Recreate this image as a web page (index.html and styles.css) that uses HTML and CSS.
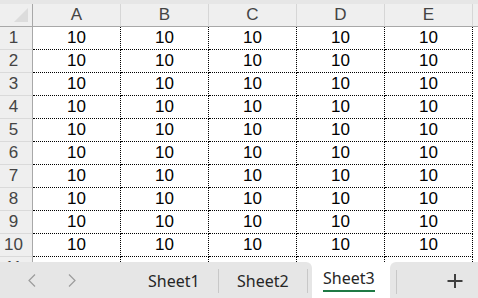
FILE: index.html
```html
<!DOCTYPE html>
<html lang="en">
<head>
  <meta charset="UTF-8">
  <meta name="viewport" content="width=device-width, initial-scale=1.0">
  <title>Sheet3</title>
  <link rel="stylesheet" href="styles.css">
</head>
<body>
  <div class="top-strip"></div>
  <div class="grid">
    <div class="corner"><span class="corner-mark"></span></div>
    <div class="col-head">A</div>
    <div class="col-head">B</div>
    <div class="col-head">C</div>
    <div class="col-head">D</div>
    <div class="col-head">E</div>
    <div class="col-head filler"></div>
  </div>

  <div class="tab-bar">
    <div class="tabs-left">
      <div class="tab-nav">
        <svg class="nav-arrow" width="8" height="13" viewBox="0 0 8 13"><path d="M7 0.5 L1 6.5 L7 12.5" fill="none" stroke="#9c9c9c" stroke-width="1.2"/></svg>
        <svg class="nav-arrow" width="8" height="13" viewBox="0 0 8 13"><path d="M1 0.5 L7 6.5 L1 12.5" fill="none" stroke="#9c9c9c" stroke-width="1.2"/></svg>
      </div>
      <div class="tab">Sheet1</div>
      <div class="tab">Sheet2</div>
    </div>
    <div class="tab active"><span class="tab-label">Sheet3</span></div>
    <div class="tabs-right">
      <div class="add-tab">
        <svg width="16" height="14" viewBox="0 0 16 14"><path d="M0.5 7 H15.5 M8 0 V14" stroke="#404040" stroke-width="2"/></svg>
      </div>
    </div>
  </div>

  <script>
    // Rows 1..10 hold the value 10 in each of the five columns;
    // row 11 only peeks out above the tab bar
    const grid = document.querySelector('.grid');
    for (let row = 1; row <= 11; row++) {
      const head = document.createElement('div');
      head.className = 'row-head';
      head.textContent = row;
      grid.appendChild(head);
      for (let col = 0; col < 5; col++) {
        const cell = document.createElement('div');
        cell.className = 'cell';
        if (row <= 10) cell.textContent = '10';
        grid.appendChild(cell);
      }
      const filler = document.createElement('div');
      filler.className = 'cell filler';
      grid.appendChild(filler);
    }
  </script>
</body>
</html>
```

FILE: styles.css
```css
* {
  margin: 0;
  padding: 0;
  box-sizing: border-box;
}

body {
  width: 478px;
  height: 298px;
  overflow: hidden;
  background-color: #ffffff;
  font-family: "Liberation Sans", Arial, sans-serif;
}

.top-strip {
  height: 4px;
  background-color: #e6e6e6;
}

.grid {
  display: grid;
  grid-template-columns: 33px repeat(5, 88px) 1fr;
  grid-auto-rows: 23px;
  height: 258px;
  overflow: hidden;
  font-size: 17px;
}

.corner {
  background-color: #efefef;
  border-right: 1px solid #a8a8a8;
  border-bottom: 1px solid #a8a8a8;
  position: relative;
}

.corner-mark {
  position: absolute;
  left: 14px;
  top: 4px;
  width: 0;
  height: 0;
  border-left: 14px solid transparent;
  border-bottom: 14px solid #dcdcdc;
}

.col-head {
  display: flex;
  justify-content: center;
  align-items: center;
  background-color: #efefef;
  border-right: 1px solid #d6d6d6;
  border-bottom: 1px solid #a8a8a8;
  color: #444444;
}

.row-head {
  display: flex;
  justify-content: center;
  align-items: center;
  padding-right: 5px;
  background-color: #efefef;
  border-right: 1px solid #a8a8a8;
  border-bottom: 1px solid #dadada;
  color: #444444;
}

.cell {
  display: flex;
  justify-content: center;
  align-items: center;
  border-right: 1px dotted #000000;
  border-bottom: 1px dotted #000000;
  color: #000000;
}

.cell.filler {
  border: none;
}

.col-head.filler {
  border-right: none;
}

.tab-bar {
  display: flex;
  height: 36px;
  background-color: #ffffff;
  font-family: "Noto Sans", "Open Sans", sans-serif;
  font-size: 16px;
  color: #262626;
}

.tabs-left {
  display: flex;
  align-items: center;
  width: 312px;
  background-color: #e6e6e6;
  border-top-right-radius: 6px;
}

.tab-nav {
  display: flex;
  align-items: center;
  gap: 32px;
  width: 130px;
  padding-left: 28px;
  padding-top: 1px;
}

.tab {
  display: flex;
  align-items: center;
  width: 89px;
  height: 24px;
  padding: 0 0 0 18px;
  border-right: 1px solid #c8c8c8;
  margin-top: 2px;
}

.tab.active {
  width: 78px;
  height: 36px;
  margin-top: 0;
  padding: 0 0 0 11px;
  border-right: none;
  align-items: flex-start;
}

.tab-label {
  margin-top: 5px;
  padding-bottom: 1px;
  border-bottom: 2px solid #1f7a45;
}

.tabs-right {
  flex: 1;
  display: flex;
  align-items: center;
  justify-content: flex-end;
  background-color: #e6e6e6;
  border-top-left-radius: 6px;
  position: relative;
}

.tabs-right::before {
  content: "";
  position: absolute;
  left: 6px;
  top: 8px;
  height: 24px;
  border-left: 1px solid #c8c8c8;
}

.add-tab {
  display: flex;
  align-items: center;
  padding: 1px 15px 0 0;
}
```
